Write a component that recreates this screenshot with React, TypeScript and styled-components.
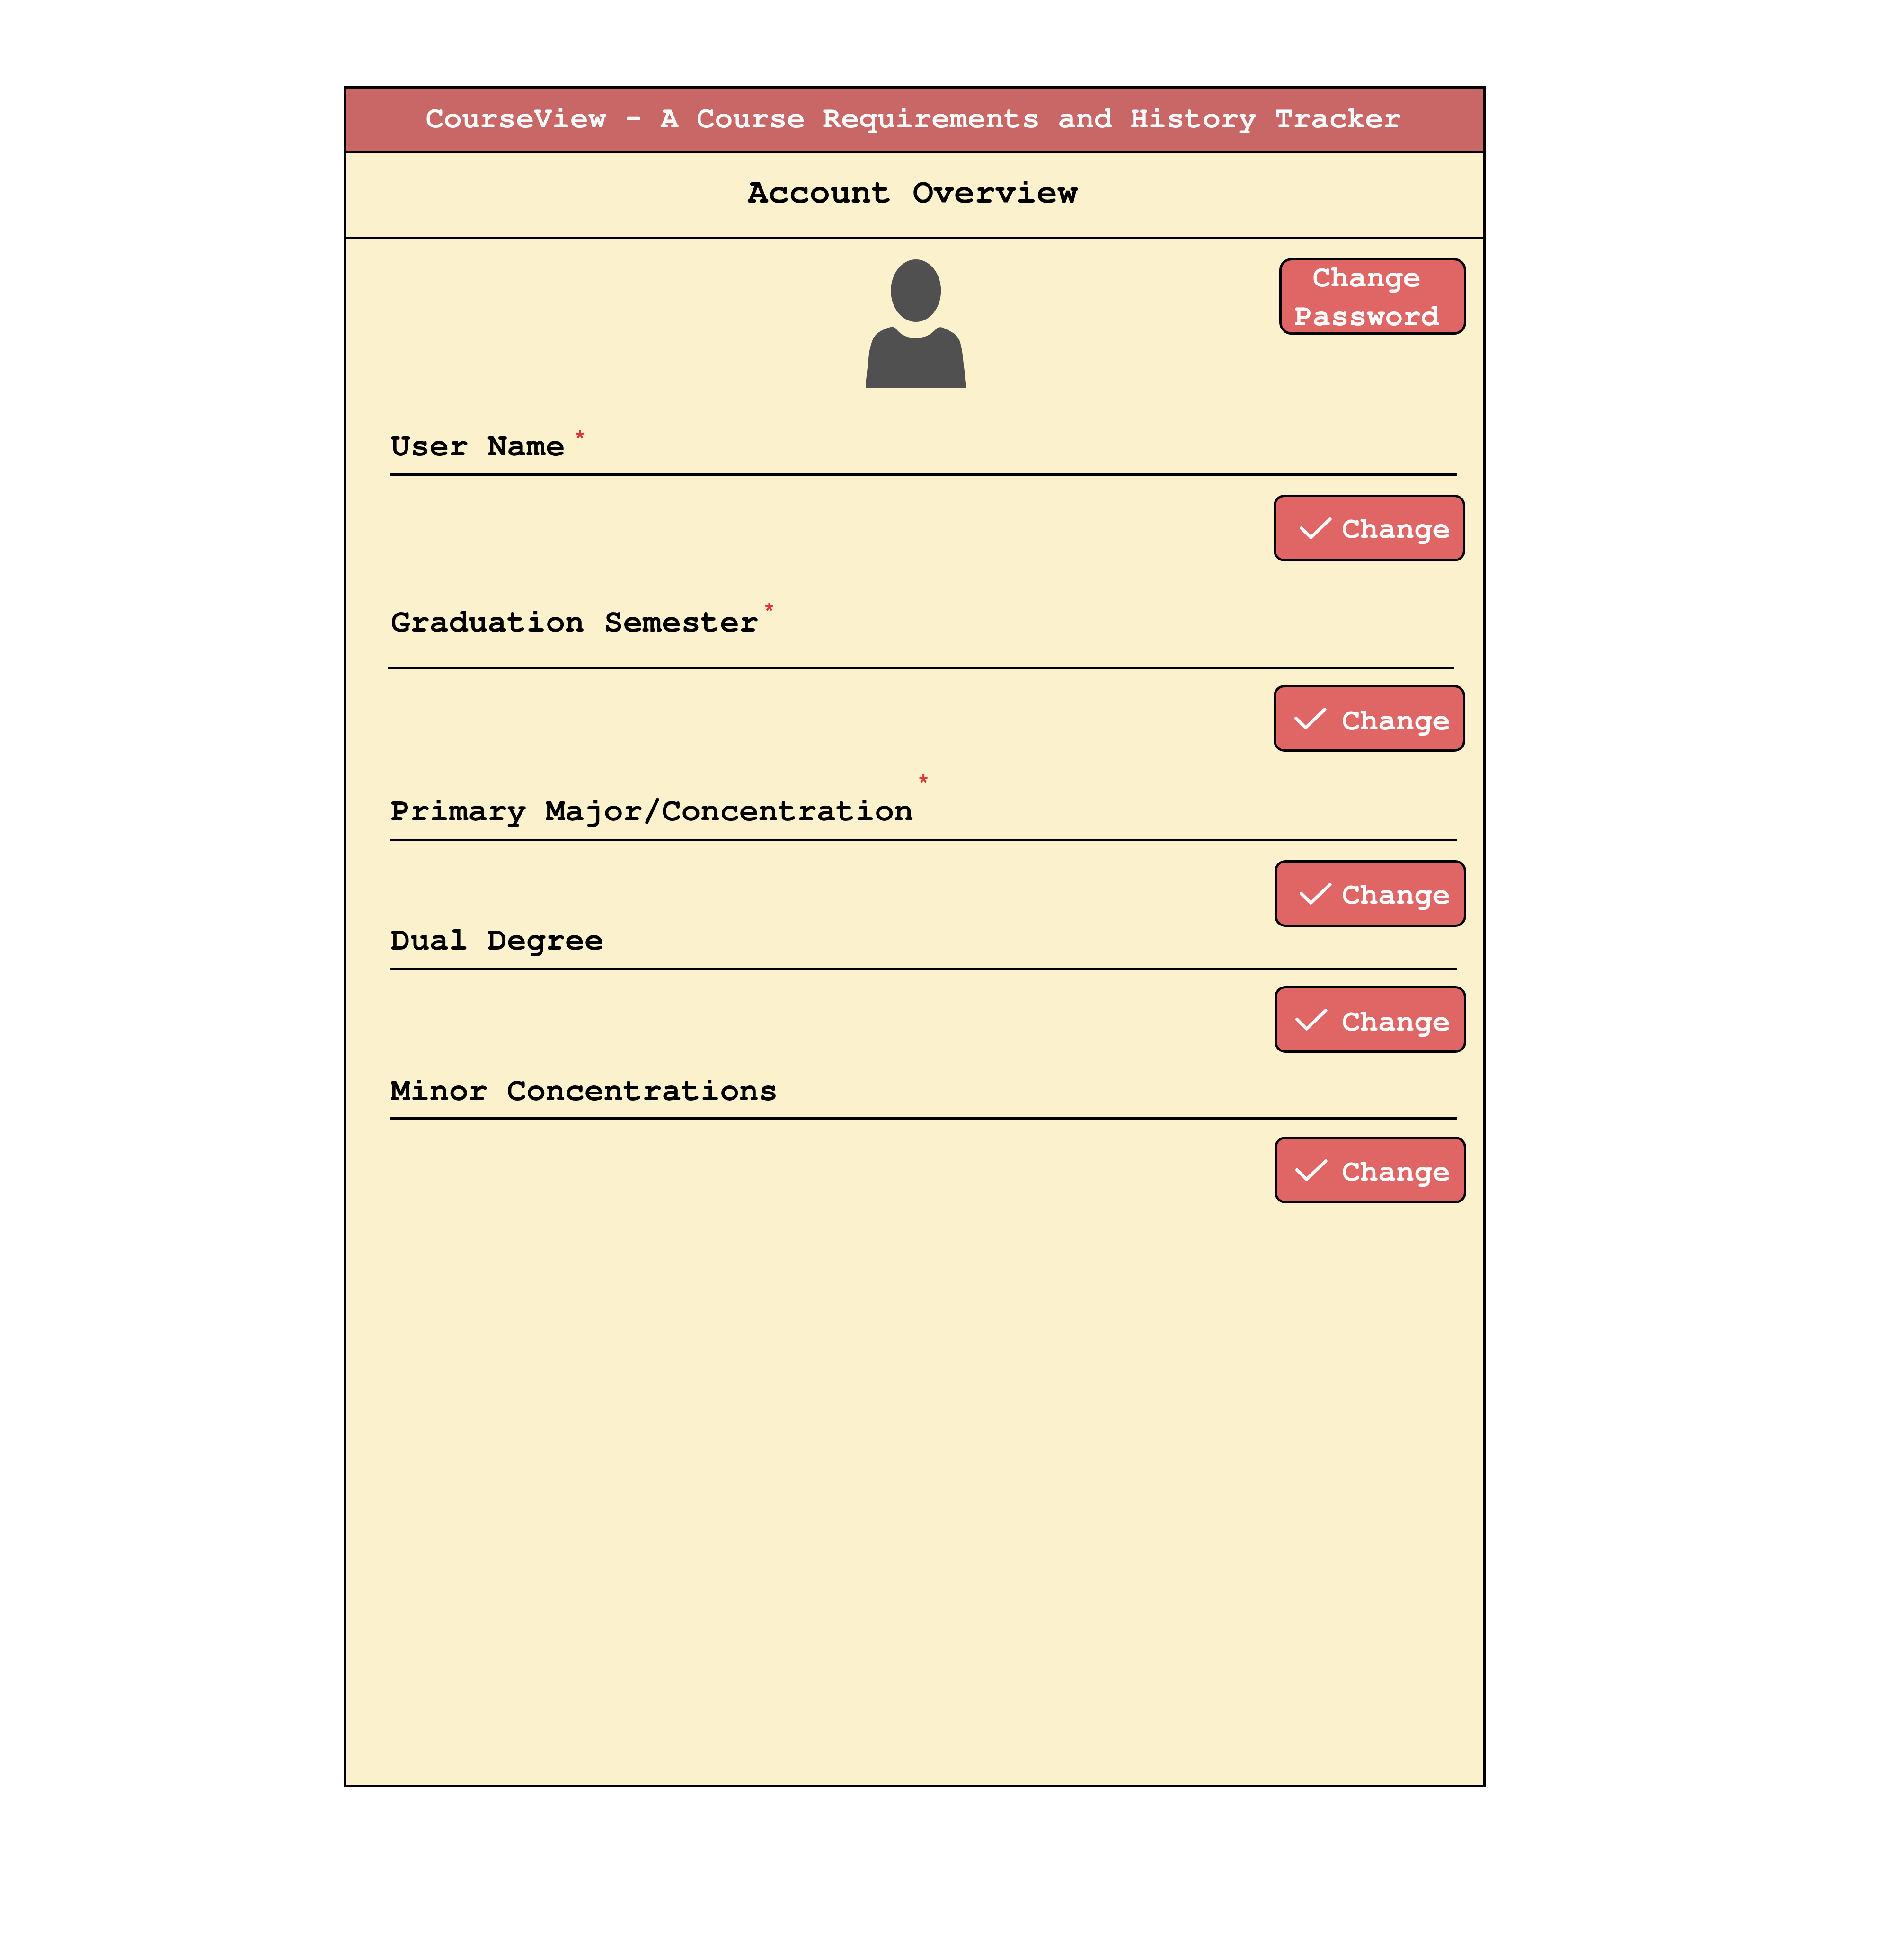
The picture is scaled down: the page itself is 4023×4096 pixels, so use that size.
import React from "react";
import styled, { createGlobalStyle } from "styled-components";

const GlobalStyle = createGlobalStyle`
  *, *::before, *::after { box-sizing: border-box; }
  body { margin: 0; background: #ffffff; }
`;

const mono = `FreeMono, "Liberation Mono", "Courier New", monospace`;

const Page = styled.div`
  display: flex;
  align-items: flex-start;
  width: 4023px;
  height: 4096px;
  padding: 182px 0 0 727px;
  overflow: hidden;
  background: #ffffff;
  font-family: ${mono};
  font-weight: 700;
`;

const Panel = styled.main`
  display: flex;
  flex-direction: column;
  width: 2412px;
  height: 3593px;
  border: 5px solid #000000;
  background: #fcf1cd;
`;

const Banner = styled.header`
  flex: none;
  height: 136px;
  padding: 27px 0 0 167.5px;
  border-bottom: 5px solid #000000;
  background: #c86765;
  color: #f9fafc;
  font-size: 63.63px;
  line-height: 72px;
  white-space: pre;
`;

const Dash = styled.span`
  font-family: "Courier Prime", ${mono};
  line-height: 0;
`;

const Heading = styled.h1`
  flex: none;
  height: 182px;
  margin: 0;
  padding: 42px 0 0 847.7px;
  border-bottom: 5px solid #000000;
  font-size: 72.72px;
  font-weight: 700;
  line-height: 83px;
  color: #000000;
  white-space: pre;
`;

const Profile = styled.section`
  display: flex;
  flex: none;
  justify-content: space-between;
  align-items: flex-start;
  height: 413px;
  padding: 40px 36px 0 1096.6px;
`;

const AvatarIcon = styled.svg`
  display: block;
  width: 213px;
  height: 272px;
  margin-top: 3px;
  fill: #505050;
`;

const Button = styled.button`
  display: flex;
  flex: none;
  margin: 0;
  border: 5px solid #000000;
  background: #e06665;
  color: #ffffff;
  font-family: ${mono};
  font-size: 63.63px;
  font-weight: 700;
`;

const PasswordButton = styled(Button)`
  align-items: center;
  justify-content: center;
  width: 395px;
  height: 162px;
  padding: 2px 25px 0 0;
  border-radius: 26px;
  line-height: 82px;
  text-align: center;
`;

const ChangeButton = styled(Button)<{ $inset: number; $iconLeft: number }>`
  align-items: flex-start;
  align-self: flex-end;
  width: 405px;
  height: 141px;
  margin-right: ${(p) => p.$inset}px;
  padding: 0 0 0 ${(p) => p.$iconLeft}px;
  border-radius: 23px;
`;

const CheckIcon = styled.svg`
  display: block;
  flex: none;
  width: 68px;
  height: 46px;
  margin-top: 42.5px;
  fill: none;
  stroke: #ffffff;
  stroke-width: 6.8;
  stroke-linecap: round;
  stroke-linejoin: round;
`;

const ChangeText = styled.span<{ $left: number; $top: number }>`
  margin: ${(p) => p.$top}px 0 0 ${(p) => p.$left}px;
  line-height: 72px;
`;

const Field = styled.section<{ $before: number }>`
  display: flex;
  flex: none;
  flex-direction: column;
  margin-top: ${(p) => p.$before}px;
`;

const LabelRow = styled.div`
  display: flex;
  align-items: flex-start;
  height: 51px;
  padding-left: 94px;
`;

const Label = styled.span`
  margin-top: -2px;
  font-size: 68.17px;
  line-height: 51px;
  color: #000000;
  white-space: pre;
`;

const Required = styled.span<{ $left: number; $top: number }>`
  margin: ${(p) => p.$top}px 0 0 ${(p) => p.$left}px;
  font-family: FreeSans, "Liberation Sans", Arial, sans-serif;
  font-size: 54.54px;
  font-weight: 700;
  line-height: 62px;
  color: #e03535;
`;

const Rule = styled.div<{ $top: number; $left: number }>`
  width: 2253px;
  height: 5px;
  margin: ${(p) => p.$top}px 0 0 ${(p) => p.$left}px;
  background: #000000;
`;

const ButtonRow = styled.div<{ $top: number }>`
  display: flex;
  flex-direction: column;
  margin-top: ${(p) => p.$top}px;
`;

interface FieldSpec {
  label: string;
  before: number;
  star?: { left: number; top: number };
  rule: { top: number; left: number };
  button: { top: number; inset: number; iconLeft: number };
  text: { left: number; top: number };
}

const fields: FieldSpec[] = [
  {
    label: "User Name",
    before: 0,
    star: { left: 21, top: -16 },
    rule: { top: 31, left: 93 },
    button: { top: 40, inset: 38, iconLeft: 50 },
    text: { left: 21.7, top: 31 },
  },
  {
    label: "Graduation Semester",
    before: 104,
    star: { left: 12, top: -24 },
    rule: { top: 67, left: 88 },
    button: { top: 34, inset: 38, iconLeft: 39 },
    text: { left: 32.7, top: 34 },
  },
  {
    label: "Primary Major/Concentration",
    before: 101,
    star: { left: 10.5, top: -60 },
    rule: { top: 32, left: 93 },
    button: { top: 40, inset: 36, iconLeft: 48 },
    text: { left: 21.7, top: 32 },
  },
  {
    label: "Dual Degree",
    before: 4,
    rule: { top: 31, left: 93 },
    button: { top: 34, inset: 36, iconLeft: 39 },
    text: { left: 30.7, top: 34 },
  },
  {
    label: "Minor Concentrations",
    before: 56,
    rule: { top: 29, left: 93 },
    button: { top: 36, inset: 36, iconLeft: 39 },
    text: { left: 30.7, top: 33 },
  },
];

function Avatar() {
  return (
    <AvatarIcon viewBox="575 624 432 838" preserveAspectRatio="none">
      <ellipse cx="790.5" cy="827.5" rx="107.5" ry="203.5" />
      <path d="M575 1462 L577 1410 L587 1275 Q589 1215 603 1155 Q613 1112 640 1090 Q665 1070 685 1064 Q701 1063 708 1081 Q738 1134 780 1134 L803 1133 Q840 1133 873 1083 Q884 1059 904 1067 Q930 1083 955 1107 Q972 1130 980 1162 Q990 1220 993 1280 L1003 1400 L1007 1462 Z" />
    </AvatarIcon>
  );
}

function FieldBlock({ label, before, star, rule, button, text }: FieldSpec) {
  return (
    <Field $before={before}>
      <LabelRow>
        <Label>{label}</Label>
        {star && (
          <Required $left={star.left} $top={star.top}>
            *
          </Required>
        )}
      </LabelRow>
      <Rule $top={rule.top} $left={rule.left} />
      <ButtonRow $top={button.top}>
        <ChangeButton $inset={button.inset} $iconLeft={button.iconLeft}>
          <CheckIcon viewBox="0 0 68 46">
            <path d="M3.5 22.4 L23.7 42.4 L64.2 3.5" />
          </CheckIcon>
          <ChangeText $left={text.left} $top={text.top}>
            Change
          </ChangeText>
        </ChangeButton>
      </ButtonRow>
    </Field>
  );
}

export default function App() {
  return (
    <>
      <GlobalStyle />
      <Page>
        <Panel>
          <Banner>
            CourseView <Dash>-</Dash> A Course Requirements and History Tracker
          </Banner>
          <Heading>Account Overview</Heading>
          <Profile>
            <Avatar />
            <PasswordButton>
              Change
              <br />
              Password
            </PasswordButton>
          </Profile>
          {fields.map((f) => (
            <FieldBlock key={f.label} {...f} />
          ))}
        </Panel>
      </Page>
    </>
  );
}
